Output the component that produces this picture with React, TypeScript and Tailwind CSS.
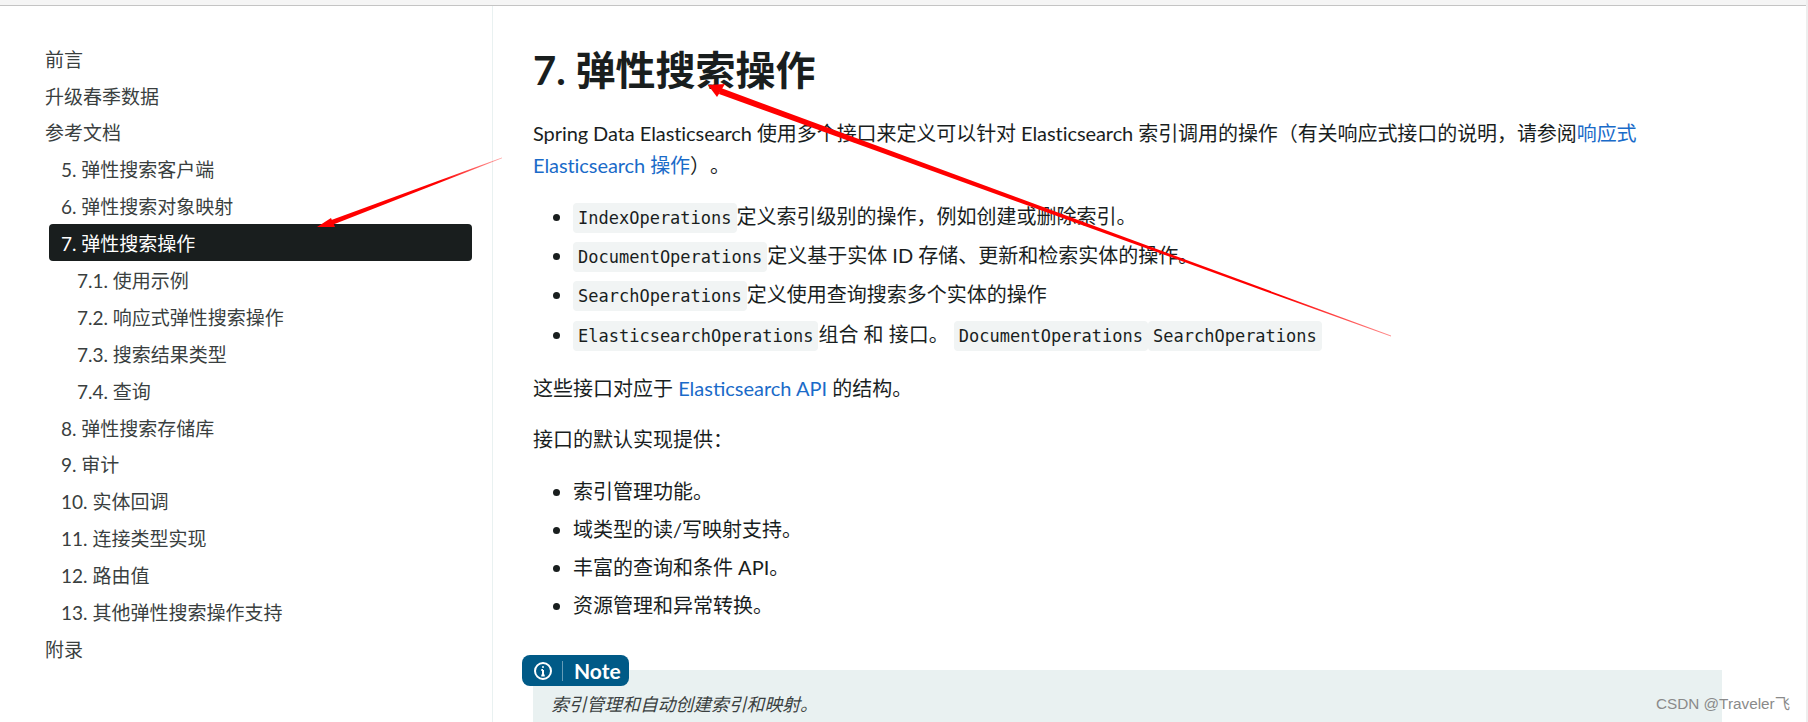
const sideItems = [
  { label: '前言', level: 0 },
  { label: '升级春季数据', level: 0 },
  { label: '参考文档', level: 0 },
  { label: '5. 弹性搜索客户端', level: 1 },
  { label: '6. 弹性搜索对象映射', level: 1 },
  { label: '7. 弹性搜索操作', level: 1, active: true },
  { label: '7.1. 使用示例', level: 2 },
  { label: '7.2. 响应式弹性搜索操作', level: 2 },
  { label: '7.3. 搜索结果类型', level: 2 },
  { label: '7.4. 查询', level: 2 },
  { label: '8. 弹性搜索存储库', level: 1 },
  { label: '9. 审计', level: 1 },
  { label: '10. 实体回调', level: 1 },
  { label: '11. 连接类型实现', level: 1 },
  { label: '12. 路由值', level: 1 },
  { label: '13. 其他弹性搜索操作支持', level: 1 },
  { label: '附录', level: 0 },
];

function Code({ children }: { children: string }) {
  return (
    <code className="rounded-[4px] bg-[#f1f4f4] px-[5px] py-[5px] font-['DejaVu_Sans_Mono',monospace] text-[17px] leading-none text-[#191e1e]">
      {children}
    </code>
  );
}

function Arrows() {
  return (
    <svg className="pointer-events-none absolute left-0 top-0" width="1808" height="722" viewBox="0 0 1808 722">
      <defs>
        <linearGradient id="tailA" gradientUnits="userSpaceOnUse" x1="1391" y1="336" x2="1280" y2="296">
          <stop offset="0" stopColor="#ff0000" stopOpacity="0.45" />
          <stop offset="1" stopColor="#ff0000" />
        </linearGradient>
        <linearGradient id="tailB" gradientUnits="userSpaceOnUse" x1="502" y1="158" x2="440" y2="180">
          <stop offset="0" stopColor="#ff0000" stopOpacity="0.35" />
          <stop offset="1" stopColor="#ff0000" />
        </linearGradient>
      </defs>
      <polygon points="1391,335.6 721,88 719,94 1391,336.6" fill="url(#tailA)" />
      <polygon points="708,85 725,84 717,97" fill="#ff0000" />
      <polygon points="502,157.4 330,220.5 332,225 502,158.2" fill="url(#tailB)" />
      <polygon points="317,227 331,218 335,227" fill="#ff0000" />
    </svg>
  );
}

export default function App() {
  return (
    <div className="relative h-[722px] w-[1808px] overflow-hidden bg-white font-['Lato','Noto_Sans_CJK_SC',sans-serif] text-[#191e1e] [text-spacing-trim:space-all]">
      <div className="h-[6px] border-b border-[#c4c4c4] bg-[#f5f5f5]" />
      <div className="flex h-[716px]">
        {/* Sidebar */}
        <aside className="w-[493px] shrink-0 border-r border-[#e9f1f1] pt-[34px] pl-[45px] text-[19px] text-[#3a3f3f]">
          {sideItems.map((item) => (
            <div
              key={item.label}
              className={`flex h-[36.9px] items-center pt-[3px] ${item.level === 1 ? 'ml-[4px] pl-[12px]' : ''} ${item.level === 2 ? 'ml-[4px] pl-[28px]' : ''} ${item.active ? 'w-[423px] rounded-[4px] bg-[#191e1e] text-white' : ''}`}
            >
              {item.label}
            </div>
          ))}
        </aside>

        {/* Main content */}
        <main className="min-w-0 flex-1 pl-[40px] text-[20px]">
          <h1 className="mt-[38px] text-[40px] font-bold leading-[52px]">7. 弹性搜索操作</h1>
          <p className="mt-[21px] w-[1120px] leading-[32px] tracking-[-0.07px]">
            Spring Data Elasticsearch 使用多个接口来定义可以针对 Elasticsearch 索引调用的操作（有关响应式接口的说明，请参阅<a className="text-[#1a6bc9]">响应式 Elasticsearch 操作</a>）。
          </p>
          <ul className="mt-[19px] list-disc pl-[40px]">
            <li className="mb-[7.2px] leading-[32px]"><Code>IndexOperations</Code>定义索引级别的操作，例如创建或删除索引。</li>
            <li className="mb-[7.2px] leading-[32px]"><Code>DocumentOperations</Code>定义基于实体 ID 存储、更新和检索实体的操作。</li>
            <li className="mb-[7.2px] leading-[32px]"><Code>SearchOperations</Code>定义使用查询搜索多个实体的操作</li>
            <li className="leading-[32px]"><Code>ElasticsearchOperations</Code>组合 和 接口。 <Code>DocumentOperations</Code><Code>SearchOperations</Code></li>
          </ul>
          <p className="mt-[22px] leading-[32px]">这些接口对应于 <a className="text-[#1a6bc9]">Elasticsearch API</a> 的结构。</p>
          <p className="mt-[19px] leading-[32px]">接口的默认实现提供：</p>
          <ul className="mt-[20px] list-disc pl-[40px]">
            <li className="mb-[6.2px] leading-[32px]">索引管理功能。</li>
            <li className="mb-[6.2px] leading-[32px]">域类型的读/写映射支持。</li>
            <li className="mb-[6.2px] leading-[32px]">丰富的查询和条件 API。</li>
            <li className="leading-[32px]">资源管理和异常转换。</li>
          </ul>

          {/* Note admonition */}
          <div className="relative mt-[49px] h-[60px] w-[1189px] bg-[#e9f1f1] pl-[18px] pt-[18px] text-[17.8px] italic leading-[32px] text-[#3a3f3f]">
            <div className="absolute -left-[11px] -top-[15px] flex h-[31px] w-[107px] items-center rounded-[8px] bg-[#005a87] pl-[11px] text-[21px] font-bold not-italic text-white">
              <svg width="20" height="20" viewBox="0 0 20 20" fill="none" stroke="white" strokeWidth="2">
                <circle cx="10" cy="10" r="8" />
                <path d="M10 9v5.5M8.3 9h1.7M8.3 14.5h3.4" />
                <circle cx="10" cy="6" r="0.6" fill="white" strokeWidth="1" />
              </svg>
              <span className="ml-[9px] h-[20px] w-px bg-white/40" />
              <span className="ml-[11px]">Note</span>
            </div>
            索引管理和自动创建索引和映射。
          </div>
        </main>
      </div>

      <Arrows />

      <div className="absolute left-[1656px] top-[694px] font-['Liberation_Sans','Noto_Sans_CJK_SC',sans-serif] text-[15.3px] leading-[20px] text-[#8a8a8a]">
        CSDN @Traveler飞
      </div>
      <div className="absolute right-0 top-0 h-[722px] w-[2px] bg-[#eeeeee]" />
    </div>
  );
}
